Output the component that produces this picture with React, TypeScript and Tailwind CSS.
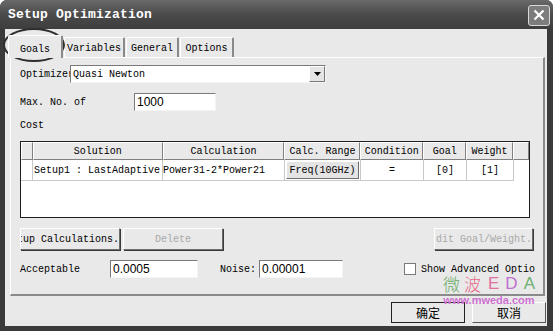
import React from 'react';

const mono = "font-['Liberation_Mono','DejaVu_Sans_Mono',monospace]";

function Tab({ label, active, w }: { label: string; active?: boolean; w: string }) {
  return (
    <div
      className={`${w} ${active ? 'h-[23px] bg-[#e9e9e9] z-10 -mb-px pt-[6px]' : 'h-[20px] pt-[3px]'} border-l border-t border-white border-r-2 border-r-[#8a8a8a] rounded-t-[2px] text-center text-[10px] text-black ${mono}`}
    >
      {label}
    </div>
  );
}

function Btn({ label, w, disabled, className = '' }: { label: string; w: string; disabled?: boolean; className?: string }) {
  return (
    <div
      className={`${w} h-[22px] flex items-center justify-center overflow-hidden whitespace-nowrap bg-[#e9e9e9] border border-t-white border-l-white border-r-[#6e6e6e] border-b-[#6e6e6e] shadow-[1px_1px_0_#3a3a3a] text-[10px] ${disabled ? 'text-[#a8a8a8]' : 'text-black'} ${mono} ${className}`}
    >
      {label}
    </div>
  );
}

function Field({ value, w }: { value: string; w: string }) {
  return (
    <div
      className={`${w} h-[18px] bg-white border border-t-[#7a7a7a] border-l-[#7a7a7a] border-r-[#f4f4f4] border-b-[#f4f4f4] pl-[2px] text-[12px] leading-[16px] text-black font-['Liberation_Sans',Arial,sans-serif]`}
    >
      {value}
    </div>
  );
}

const cols = [
  { key: 'rh', w: 'w-[12px]', head: '' },
  { key: 'sol', w: 'w-[130px]', head: 'Solution' },
  { key: 'calc', w: 'w-[122px]', head: 'Calculation' },
  { key: 'range', w: 'w-[76px]', head: 'Calc. Range' },
  { key: 'cond', w: 'w-[63px]', head: 'Condition' },
  { key: 'goal', w: 'w-[43px]', head: 'Goal' },
  { key: 'weight', w: 'w-[47px]', head: 'Weight' },
  { key: 'end', w: 'w-[16px]', head: '' },
];

export default function App() {
  return (
    <div className="w-[553px] h-[331px] bg-[#3a3a3a] rounded-t-[7px] flex flex-col relative overflow-hidden">
      {/* title bar */}
      <div className="h-[29px] shrink-0 flex items-center justify-between pl-[8px] pr-[3px] bg-gradient-to-b from-[#6a6a6a] via-[#4a4a4a] to-[#3e3e3e]">
        <span className={`text-white font-bold text-[13px] ${mono} tracking-[0.2px]`}>Setup Optimization</span>
        <div className="w-[22px] h-[21px] mt-[1px] rounded-[3px] border border-[#d8d8d8] bg-[#7c7c7c] flex items-center justify-center">
          <svg width="12" height="12" viewBox="0 0 12 12">
            <path d="M1.5 1.5 L10.5 10.5 M10.5 1.5 L1.5 10.5" stroke="white" strokeWidth="2.2" />
          </svg>
        </div>
      </div>

      {/* body */}
      <div className="flex-1 mx-[5px] mb-[5px] ml-[5px] mr-[6px] bg-[#e9e9e9] flex flex-col relative">
        {/* tabs */}
        <div className="flex items-end pl-[3px] pt-[5px] h-[28px] gap-[1px]">
          <Tab label="Goals" active w="w-[55px]" />
          <Tab label="Variables" w="w-[61px]" />
          <Tab label="General" w="w-[53px]" />
          <Tab label="Options" w="w-[54px]" />
        </div>

        {/* tab panel */}
        <div className="ml-[5px] mr-[2px] h-[239px] border-l border-t border-white border-r-2 border-b-2 border-r-[#8a8a8a] border-b-[#8a8a8a] flex flex-col pl-[9px] text-[10px] text-black">
          <div className={`flex items-center mt-[7px] h-[18px] ${mono}`}>
            <span className="w-[50px] overflow-hidden whitespace-nowrap">Optimizer</span>
            <div className="w-[256px] h-[18px] bg-white border border-t-[#7a7a7a] border-l-[#7a7a7a] border-r-[#f4f4f4] border-b-[#f4f4f4] flex items-center justify-between pl-[2px]">
              <span>Quasi Newton</span>
              <div className="w-[16px] h-[16px] bg-[#e4e4e4] border border-t-white border-l-white border-r-[#7a7a7a] border-b-[#7a7a7a] flex items-center justify-center">
                <svg width="7" height="4" viewBox="0 0 7 4"><path d="M0 0 H7 L3.5 4 Z" fill="black" /></svg>
              </div>
            </div>
          </div>

          <div className={`flex items-center mt-[10px] h-[18px] ${mono}`}>
            <span className="w-[114px]">Max. No. of</span>
            <Field value="1000" w="w-[82px]" />
          </div>

          <div className={`mt-[7px] h-[14px] ${mono}`}>Cost</div>

          {/* table */}
          <div className={`mt-[9px] w-[510px] h-[77px] border border-[#1e1e1e] bg-white ${mono}`}>
            <div className="flex h-[18px] bg-[#e9e9e9]">
              {cols.map((c) => (
                <div
                  key={c.key}
                  className={`${c.w} h-full flex items-center justify-center border-t border-l border-t-white border-l-white border-r border-b border-r-[#808080] border-b-[#808080] whitespace-nowrap`}
                >
                  {c.head}
                </div>
              ))}
            </div>
            <div className="flex h-[21px] bg-white">
              <div className="w-[12px] border-r border-b border-[#c8c8c8]" />
              <div className="w-[130px] border-r border-b border-[#c8c8c8] flex items-center pl-[1px] whitespace-nowrap">Setup1 : LastAdaptive</div>
              <div className="w-[122px] border-r border-b border-[#c8c8c8] flex items-center whitespace-nowrap">Power31-2*Power21</div>
              <div className="w-[76px] border-r border-b border-[#c8c8c8] flex items-center pl-[1px]">
                <div className="w-[73px] h-[18px] bg-[#e4e4e4] border border-t-white border-l-white border-r-[#6e6e6e] border-b-[#6e6e6e] flex items-center justify-center">Freq(10GHz)</div>
              </div>
              <div className="w-[63px] border-r border-b border-[#c8c8c8] flex items-center justify-center">=</div>
              <div className="w-[43px] border-r border-b border-[#c8c8c8] flex items-center justify-center">[0]</div>
              <div className="w-[47px] border-r border-b border-[#c8c8c8] flex items-center justify-center">[1]</div>
            </div>
          </div>

          {/* buttons */}
          <div className="flex mt-[10px] items-center">
            <Btn label="tup Calculations." w="w-[100px]" className="justify-end" />
            <Btn label="Delete" w="w-[100px]" disabled className="ml-[3px]" />
            <div className="flex-1" />
            <Btn label="dit Goal/Weight." w="w-[99px]" disabled className="mr-[10px] justify-end" />
          </div>

          <div className={`flex items-center mt-[10px] h-[18px] ${mono}`}>
            <span className="w-[90px]">Acceptable</span>
            <Field value="0.0005" w="w-[88px]" />
            <span className="ml-[22px] w-[39px]">Noise:</span>
            <Field value="0.00001" w="w-[84px]" />
            <div className="ml-[61px] w-[12px] h-[12px] bg-white border border-[#7a7a7a]" />
            <span className="ml-[5px] whitespace-nowrap">Show Advanced Optio</span>
          </div>
        </div>

        {/* dialog buttons */}
        <div className="flex justify-end mt-[6px] mr-[1px] gap-[7px]">
          <div className="w-[74px] h-[21px] border border-[#222] bg-[#e9e9e9] flex items-center justify-center text-[12px] font-['Noto_Sans_CJK_SC',sans-serif] text-black">
            确定
          </div>
          <div className="w-[74px] h-[21px] bg-[#e9e9e9] border border-t-white border-l-white border-r-[#555] border-b-[#555] flex items-center justify-center text-[12px] font-['Noto_Sans_CJK_SC',sans-serif] text-black">
            取消
          </div>
        </div>

        {/* watermark */}
        <div className="absolute left-[438px] top-[246px] flex flex-col items-center pointer-events-none">
          <div className="flex items-end gap-[4px] text-[17px] leading-[18px] font-['Noto_Sans_CJK_SC',sans-serif] font-light">
            <span className="text-[#6aaa6a]">微</span>
            <span className="text-[#e56a8a]">波</span>
            <span className="text-[#e070a0] font-['Liberation_Sans',sans-serif] ml-[3px]">E</span>
            <span className="text-[#c070d0] font-['Liberation_Sans',sans-serif] ml-[2px]">D</span>
            <span className="text-[#70b070] font-['Liberation_Sans',sans-serif] ml-[2px]">A</span>
          </div>
          <div className="text-[11px] leading-[12px] font-bold text-[#cc70d0] font-['Liberation_Sans',sans-serif] mt-[1px]">www.mweda.com</div>
        </div>
      </div>

      {/* annotation ellipse around Goals tab */}
      <svg className="absolute left-0 top-[26px] pointer-events-none" width="70" height="40" viewBox="0 0 70 40">
        <ellipse cx="34" cy="19" rx="30" ry="16" fill="none" stroke="#2e2e2e" strokeWidth="2" />
      </svg>
    </div>
  );
}
